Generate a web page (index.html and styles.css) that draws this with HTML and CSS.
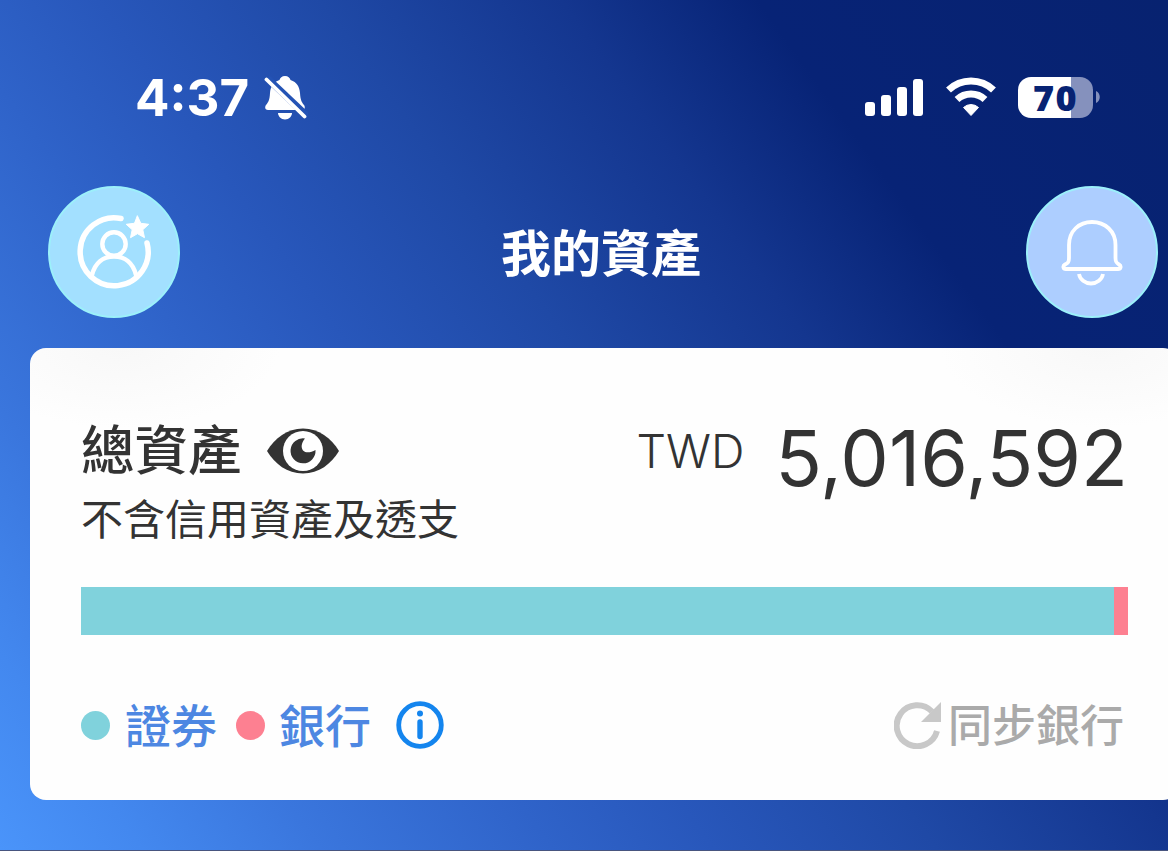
FILE: index.html
```html
<!DOCTYPE html>
<html lang="zh-Hant">
<head>
    <meta charset="UTF-8">
    <title>我的資產</title>
    <link rel="stylesheet" href="styles.css">
</head>
<body>
<div class="screen">
    <div class="status">
        <div class="status-left">
            <span class="time">4:37</span>
            <svg class="mute" width="44" height="46" viewBox="0 0 44 46">
                <path d="M21 1c-3 0-5 2-5.500 4C9 7 6.500 12 6 18c-.4 7-1.500 9-4 12-1.500 2-1 5 2 5h34c3 0 3.500-3 2-5-2.500-3-3.500-5-4-12C35.500 12 33 7 26.500 5 26 3 24 1 21 1z" fill="#fff"/>
                <path d="M14 38h14c0 3-3 6.500-7 6.500s-7-3.500-7-6.500z" fill="#fff"/>
                <path d="M3 3l40 38" stroke="#2453b5" stroke-width="7"/>
                <path d="M2.500 4.500l38 37" stroke="#fff" stroke-width="3.800" stroke-linecap="round"/>
            </svg>
        </div>
        <div class="status-right">
            <svg width="60" height="38" viewBox="0 0 60 38" fill="#fff">
                <rect x="0" y="24" width="10" height="14" rx="3"/>
                <rect x="16" y="17" width="10" height="21" rx="3"/>
                <rect x="32" y="9" width="10" height="29" rx="3"/>
                <rect x="48" y="1" width="10" height="37" rx="3"/>
            </svg>
            <svg class="wifi" width="52" height="40" viewBox="0 0 52 40">
                <path d="M3.500 13a32.500 32.500 0 0 1 45 0M12 22.500a20.500 20.500 0 0 1 28 0" fill="none" stroke="#fff" stroke-width="7"/>
                <path d="M18.500 30.500a11 11 0 0 1 15 0L26 38.500z" fill="#fff" stroke="#fff" stroke-linejoin="round"/>
            </svg>
            <div class="battery"><span>70</span></div>
            <svg class="battery-tip" width="4" height="12" viewBox="0 0 4 12"><path d="M0 0c5 2 5 10 0 12z" fill="#8591bd"/></svg>
        </div>
    </div>

    <div class="header">
        <div class="round user">
            <svg width="76" height="76" viewBox="0 0 76 76" fill="none" stroke="#fff" stroke-linecap="round">
                <path d="M45 4.500A34 34 0 1 0 71 29" stroke-width="5.500"/>
                <circle cx="38" cy="30" r="11.700" stroke-width="4.400"/>
                <path d="M16 61C19 49 27 42.500 38 42.500S57 49 60 61" stroke-width="4.400"/>
                <path d="M61.500 2l3.300 7.300 8 1-6 5.400 1.700 8-7-4-7 4 1.700-8-6-5.400 8-1z" fill="#fff" stroke-width="1"/>
            </svg>
        </div>
        <h1>我的資產</h1>
        <div class="round notice">
            <svg width="62" height="68" viewBox="0 0 62 68" fill="none" stroke="#fff" stroke-width="3.800" stroke-linejoin="round">
                <path d="M8 40V27C8 13 18 4 31 4s23.500 9 23.500 23v13c0 4 1 5 3.500 6.500 2.500 1.500 2 4.500-1 4.500H5c-3 0-3.500-3-1-4.500C7 45 8 44 8 40z"/>
                <path d="M18 56c1 5.500 6 9.500 12 9.500S41 61.500 42 56"/>
            </svg>
        </div>
    </div>

    <div class="card">
        <div class="total">
            <div>
                <div class="total-name">
                    <h2>總資產</h2>
                    <svg width="72" height="48" viewBox="0 0 72 48">
                        <path d="M0 24C8 11 20 1.500 36 1.500S64 11 72 24C64 37 52 46.500 36 46.500S8 37 0 24z" fill="#333"/>
                        <circle cx="36" cy="24" r="20" fill="#fff"/>
                        <path d="M38 11.500c-4 5-4 9-2 12 3 3 8 2 12.500-.5A12.500 12.500 0 1 1 38 11.500z" fill="#333"/>
                    </svg>
                </div>
                <p class="note">不含信用資產及透支</p>
            </div>
            <div class="money"><span class="unit">TWD</span><span class="num">5,016,592</span></div>
        </div>
        <div class="bar">
            <div class="bar-stock" style="width: 98.660%"></div>
            <div class="bar-bank"></div>
        </div>
        <div class="foot">
            <div class="legend">
                <em class="dot stock"></em><span>證券</span>
                <em class="dot bank"></em><span>銀行</span>
                <svg width="48" height="48" viewBox="0 0 48 48">
                    <circle cx="24" cy="24" r="21.300" fill="none" stroke="#1485ee" stroke-width="4.800"/>
                    <circle cx="24" cy="12.500" r="3" fill="#1485ee"/>
                    <path d="M24 21v14.500" stroke="#1485ee" stroke-width="5.400" stroke-linecap="round"/>
                </svg>
            </div>
            <div class="sync">
                <svg width="48" height="48" viewBox="0 0 48 48">
                    <path d="M38 10.500A20.500 20.500 0 1 0 43 30" fill="none" stroke="#c8c8c8" stroke-width="6"/>
                    <path d="M47 1v20H27z" fill="#c8c8c8"/>
                </svg>
                <span>同步銀行</span>
            </div>
        </div>
    </div>
</div>
</body>
</html>
```
FILE: styles.css
```css
*{
    margin:0;
    padding:0;
    box-sizing: border-box;
}
body{
    font-family: Inter,"Noto Sans CJK TC",sans-serif;
    color:#333;
    overflow: hidden;
}
svg{
    display: block;
    flex: none;
}
.screen{
    width: 1168px;
    height: 851px;
    overflow: hidden;
    border-bottom: 1px solid #48557f;
    background: linear-gradient(234deg,#072270 0%,#072376 23%,#14368f 34%,#1f49a6 47.5%,#2857bb 60%,#2f63c9 69%,#3a76dd 82%,#4388ef 92%,#4a94fa 100%);
}
.status{
    display: flex;
    justify-content: space-between;
    height: 186px;
    padding: 74px 68px 0 135px;
}
.status-left,.status-right{
    display: flex;
    align-items: center;
    height: 48px;
}
.status-right{
    height: 46px;
}
.time{
    width: 117px;
    font-size: 51px;
    line-height: 48px;
    font-weight: 750;
    white-space: nowrap;
    color:#fff;
}
.mute{
    margin-left: 12px;
}
.wifi{
    margin: 0 21px 0 20px;
}
.battery{
    width: 75px;
    height: 41px;
    border-radius: 13px;
    background: linear-gradient(90deg,#fff 71%,#8591bd 71%);
    text-align: center;
    font: 800 36px/41px "Open Sans",sans-serif;
    letter-spacing: 1.5px;
    color:#072373;
}
.battery-tip{
    margin-left: 3px;
}
.header{
    display: flex;
    justify-content: space-between;
    align-items: center;
    height: 132px;
    padding: 0 10px 0 48px;
}
.header h1{
    font-size: 50px;
    line-height: 60px;
    font-weight: 700;
    padding: 4px 4px 0 0;
    color:#fff;
}
.round{
    display: flex;
    align-items: center;
    justify-content: center;
    width: 132px;
    height: 132px;
    border-radius: 50%;
    border: 2px solid #9cf0fa;
}
.user{
    background: #a3e0ff;
}
.notice{
    background: #adceff;
}
.card{
    width: 1149px;
    height: 452px;
    margin: 30px 0 0 30px;
    padding: 67px 51px 0;
    border-radius: 16px;
    background: radial-gradient(ellipse 160px 80px at 90px 0,#f8f8f8,transparent),radial-gradient(ellipse 160px 80px at 1070px 0,#f8f8f8,transparent),#fefefe;
}
.total{
    display: flex;
    justify-content: space-between;
    height: 172px;
}
.total-name{
    display: flex;
    align-items: center;
    height: 72px;
}
.total-name h2{
    font-size: 53.500px;
    line-height: 72px;
    font-weight: 500;
    margin-right: 25px;
}
.note{
    font-size: 42px;
    line-height: 66px;
}
.money{
    display: flex;
    align-items: flex-start;
    height: 90px;
}
.unit{
    font-size: 46.500px;
    line-height: 72px;
    font-weight: 350;
    margin-right: 31px;
}
.num{
    font-size: 77px;
    line-height: 87px;
    font-weight: 380;
}
.bar{
    display: flex;
    width: 1047px;
    height: 48px;
}
.bar-stock{
    background: #80d2dc;
}
.bar-bank{
    flex: 1;
    background: #fd8091;
}
.foot{
    display: flex;
    justify-content: space-between;
    align-items: center;
    height: 64px;
    margin-top: 58px;
}
.legend,.sync{
    display: flex;
    align-items: center;
    font-size: 46px;
    line-height: 64px;
    font-weight: 500;
}
.legend{
    color:#4d87e2;
}
.legend span{
    margin: 2px 19px 0 15px;
}
.legend span:last-of-type{
    margin: 2px 25px 0 14px;
}
.dot{
    width: 29px;
    height: 29px;
    border-radius: 50%;
}
.stock{
    background: #80d2dc;
}
.bank{
    background: #fd8091;
}
.sync{
    font-size: 44px;
    margin-right: 4px;
    color:#aaa;
}
.sync span{
    margin: 2px 0 0 6px;
}
```
